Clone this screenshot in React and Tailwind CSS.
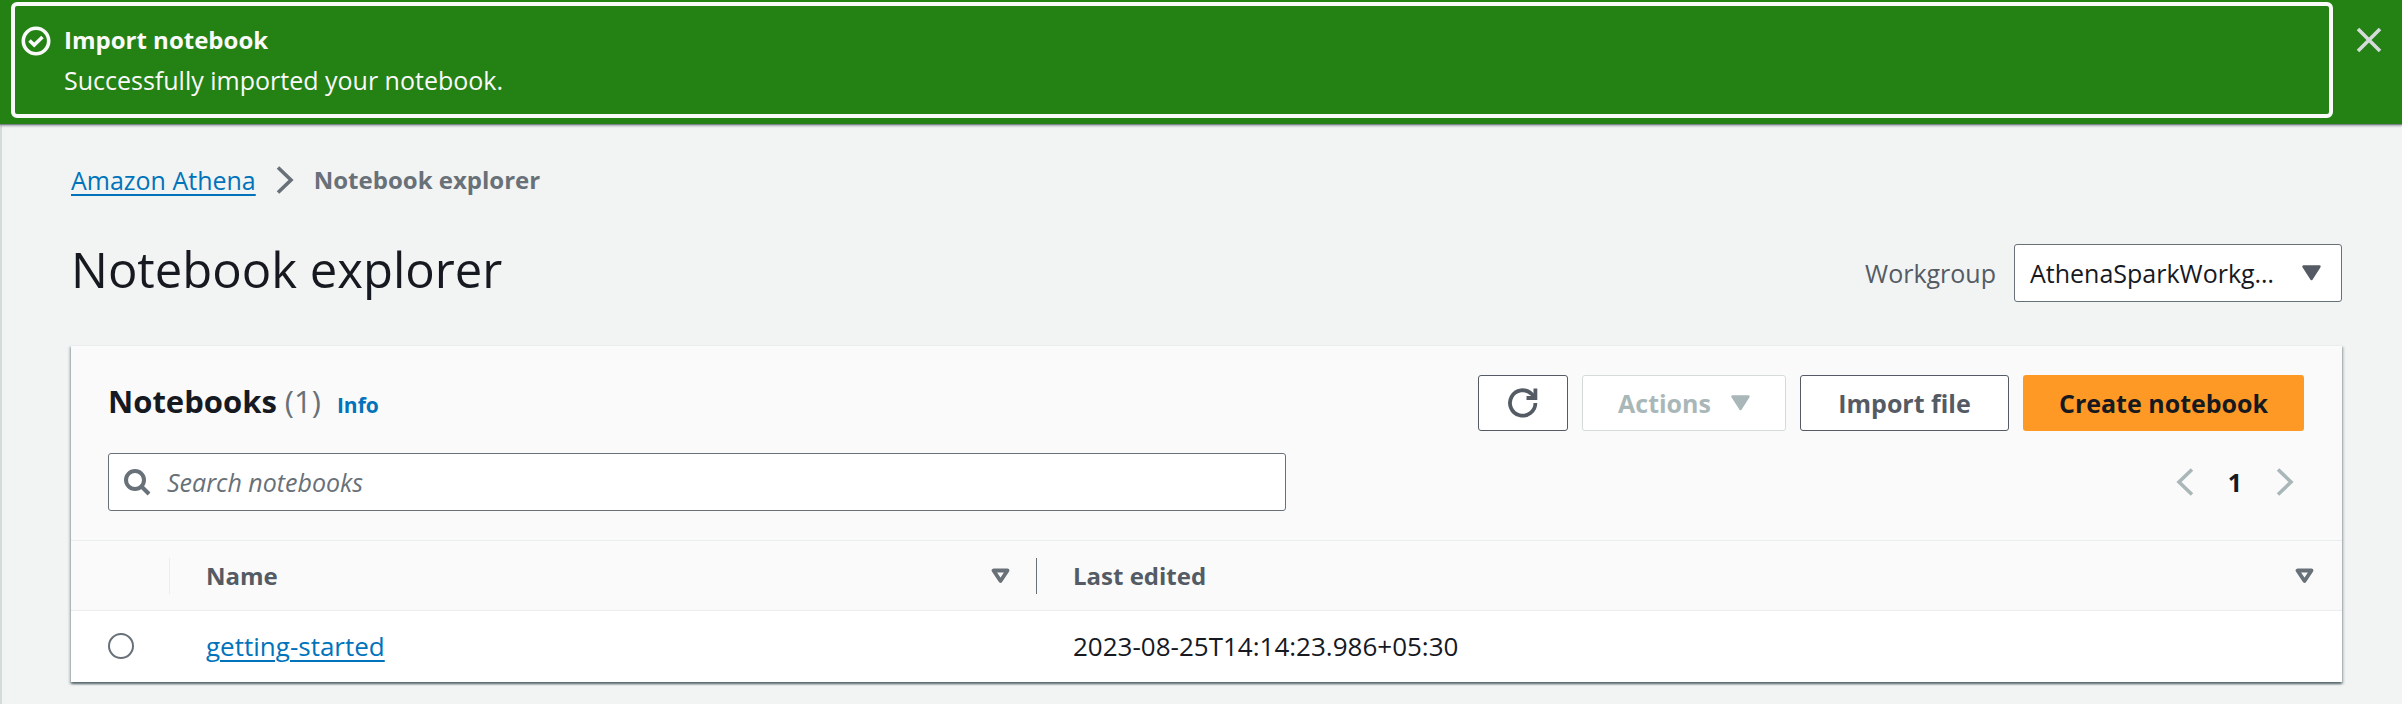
import React from 'react';

const stroke = { fill: 'none', stroke: 'currentColor' };

function SuccessIcon() {
  return (
    <svg viewBox="0 0 30 30" className="size-[30px]" aria-hidden="true" {...stroke} strokeWidth="3.6">
      <circle cx="15" cy="15" r="12.7" />
      <path d="M8.5 14.5 13.2 19 21.5 11" />
    </svg>
  );
}

function CloseIcon() {
  return (
    <svg viewBox="0 0 26 26" className="size-[26px]" aria-hidden="true" {...stroke} strokeWidth="3.6">
      <path d="M2 2 24 24M24 2 2 24" />
    </svg>
  );
}

function Chevron({ left = false }) {
  return (
    <svg viewBox="0 0 18 28" className="h-7 w-[18px]" aria-hidden="true" {...stroke} strokeWidth="3.6">
      <path d={left ? 'M16 1.5 3 14 16 26.5' : 'M2 1.5 15 14 2 26.5'} />
    </svg>
  );
}

function CaretDown({ className }) {
  return (
    <svg viewBox="0 0 19 16" className={`h-4 w-[19px] ${className}`} aria-hidden="true">
      <path
        d="M1.5 1.5h16L9.5 14z"
        fill="currentColor"
        stroke="currentColor"
        strokeWidth="2.4"
        strokeLinejoin="round"
      />
    </svg>
  );
}

function SortIcon() {
  return (
    <svg
      viewBox="0 0 19 16"
      className="h-4 w-[19px] text-[#687078]"
      aria-hidden="true"
      {...stroke}
      strokeWidth="3.8"
      strokeLinejoin="round"
    >
      <path d="M2.5 2.5h14l-7 10.5z" />
    </svg>
  );
}

function RefreshIcon() {
  return (
    <svg viewBox="0 0 30 30" className="size-[30px]" aria-hidden="true" {...stroke} strokeWidth="3.8">
      <path d="M27.4 15A12.7 12.7 0 1 1 23.5 5.8L27 9.5" />
      <path d="M27.4 .5V10H18.5" />
    </svg>
  );
}

function SearchIcon() {
  return (
    <svg viewBox="0 0 28 28" className="size-7" aria-hidden="true" {...stroke} strokeWidth="4">
      <circle cx="12" cy="12" r="9" />
      <path d="M18.5 18.5 26 26" />
    </svg>
  );
}

const buttonBase = 'flex h-14 items-center justify-center rounded-[3px] font-bold';

function HeaderCell({ children, divider }) {
  return (
    <th scope="col" className="h-[70px] p-0 text-left text-[24px] font-bold">
      <div className={`flex h-9 items-center ${divider}`}>{children}</div>
    </th>
  );
}

export default function App() {
  return (
    <div className="flex min-h-screen flex-col bg-[#f2f3f3] font-['Open_Sans','Noto_Sans',sans-serif] text-[25px] leading-10 font-medium text-[#16191f]">
      <header className="relative flex items-start bg-[#248114] pt-[2px] pr-5 pb-[6px] pl-[11px] text-[#fafafa] shadow-[0_1px_0_0_#7d8489,0_2px_2px_0_#68707899]">
        <div
          role="status"
          className="flex h-[116px] flex-1 items-start gap-[13px] rounded-md border-4 border-[#fafafa] px-[6px] pt-[14px]"
        >
          <div className="pt-[6px]">
            <SuccessIcon />
          </div>
          <div>
            <h2 className="text-[24px] font-bold">Import notebook</h2>
            <p>Successfully imported your notebook.</p>
          </div>
        </div>
        <button type="button" aria-label="Dismiss" className="mt-[25px] ml-[23px] text-[#d5dbdb]">
          <CloseIcon />
        </button>
      </header>

      <main className="flex-1 border-l-2 border-[#d5dbdb] pr-[60px] pl-[69px]">
        <nav aria-label="Breadcrumb" className="flex items-center gap-5 pt-9 text-[#687078]">
          <a href="#athena" className="text-[#0073bb] underline decoration-2 underline-offset-4">
            Amazon Athena
          </a>
          <Chevron />
          <span className="text-[24px] font-bold" aria-current="page">
            Notebook explorer
          </span>
        </nav>

        <div className="flex items-start justify-between pt-10">
          <h1 className="text-[49px] leading-[58px]">Notebook explorer</h1>
          <div className="flex items-center gap-[18px] pt-1">
            <label htmlFor="workgroup" className="text-[#545b64]">
              Workgroup
            </label>
            <div className="relative">
              <select
                id="workgroup"
                className="block h-[58px] w-[328px] appearance-none rounded-[3px] border border-[#687078] bg-white pr-12 pl-[15px]"
              >
                <option>AthenaSparkWorkg…</option>
              </select>
              <CaretDown className="pointer-events-none absolute top-[21px] right-[21px] text-[#545b64]" />
            </div>
          </div>
        </div>

        <section className="mt-[43px] border-t border-[#eaeded] bg-white shadow-[0_2px_2px_0_#001c2480,2px_2px_2px_0_#001c2426,-2px_2px_2px_0_#001c2426]">
          <div className="bg-[#fafafa] pt-[29px] pr-[38px] pb-[29px] pl-[37px]">
            <div className="flex items-center justify-between">
              <div className="flex items-baseline">
                <h2 className="text-[31px] font-bold">
                  Notebooks <span className="font-normal text-[#687078]">(1)</span>
                </h2>
                <a href="#info" className="pl-4 text-[21px] font-bold text-[#0073bb]">
                  Info
                </a>
              </div>
              <div className="flex gap-[14px]">
                <button
                  type="button"
                  aria-label="Refresh"
                  className={`${buttonBase} w-[90px] border border-[#545b64] bg-white text-[#545b64]`}
                >
                  <RefreshIcon />
                </button>
                <button
                  type="button"
                  disabled
                  className={`${buttonBase} w-[204px] gap-5 border border-[#d5dbdb] bg-white text-[#aab7b8]`}
                >
                  Actions
                  <CaretDown />
                </button>
                <button
                  type="button"
                  className={`${buttonBase} w-[209px] border border-[#545b64] bg-white text-[#545b64]`}
                >
                  Import file
                </button>
                <button type="button" className={`${buttonBase} w-[281px] bg-[#ff9926]`}>
                  Create notebook
                </button>
              </div>
            </div>

            <div className="flex items-center justify-between gap-10 pt-[22px]">
              <label className="flex h-[58px] w-full max-w-[1178px] items-center gap-4 rounded-[3px] border border-[#687078] bg-white px-[14px] text-[#687078]">
                <SearchIcon />
                <input
                  type="search"
                  aria-label="Search notebooks"
                  placeholder="Search notebooks"
                  className="min-w-0 flex-1 outline-none placeholder:text-[#687078] placeholder:italic"
                />
              </label>
              <nav aria-label="Pagination" className="flex items-center pr-[10px] text-[#aab7b8]">
                <button type="button" disabled aria-label="Previous page">
                  <Chevron left />
                </button>
                <button type="button" aria-current="page" className="w-[82px] font-bold text-[#16191f]">
                  1
                </button>
                <button type="button" disabled aria-label="Next page">
                  <Chevron />
                </button>
              </nav>
            </div>
          </div>

          <table className="w-full table-fixed border-collapse">
            <colgroup>
              <col className="w-[98px]" />
              <col className="w-[867px]" />
              <col />
            </colgroup>
            <thead className="border-y border-[#eaeded] bg-[#fafafa] text-[#545b64]">
              <tr>
                <th aria-label="Selection" />
                <HeaderCell divider="border-l border-[#eaeded] pl-[36px] pr-[26px] justify-between">
                  Name
                  <SortIcon />
                </HeaderCell>
                <HeaderCell divider="border-l border-[#687078] pl-[36px] pr-7 justify-between">
                  Last edited
                  <SortIcon />
                </HeaderCell>
              </tr>
            </thead>
            <tbody>
              <tr>
                <td className="h-[71px] p-0 pl-[37px]">
                  <input
                    type="radio"
                    name="notebook"
                    aria-label="Select getting-started"
                    className="block size-[26px] appearance-none rounded-full border-2 border-[#687078] bg-white"
                  />
                </td>
                <td className="p-0 pl-[37px] text-[26px]">
                  <a
                    href="#getting-started"
                    className="text-[#0073bb] underline decoration-2 underline-offset-4"
                  >
                    getting-started
                  </a>
                </td>
                <td className="p-0 pl-[37px] text-[26px]">2023-08-25T14:14:23.986+05:30</td>
              </tr>
            </tbody>
          </table>
        </section>
      </main>
    </div>
  );
}
